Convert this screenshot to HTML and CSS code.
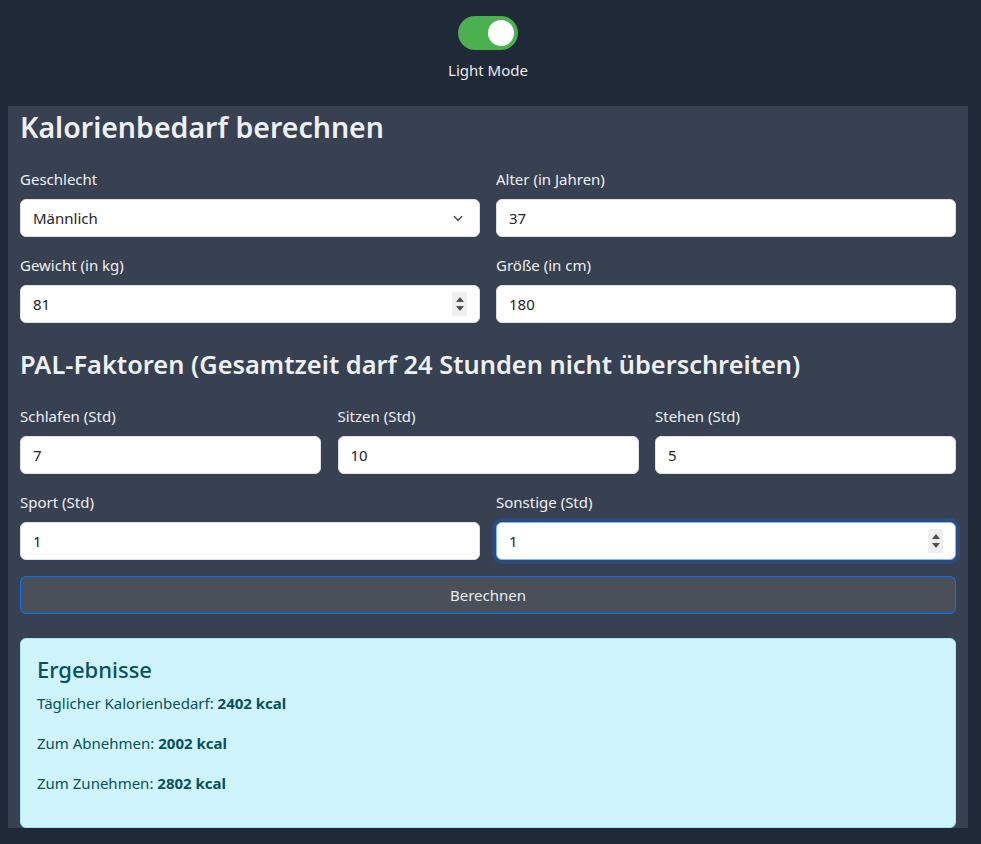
FILE: index.html
```html
<!DOCTYPE html>
<html lang="de">
<head>
<meta charset="utf-8">
<title>Kalorienbedarf berechnen</title>
<link rel="stylesheet" href="styles.css">
</head>
<body>
<div class="page">
  <header class="top">
    <label class="switch">
      <input type="checkbox" checked>
      <span class="slider"></span>
    </label>
    <div class="mode-label">Light Mode</div>
  </header>

  <main class="panel">
    <h2 class="title">Kalorienbedarf berechnen</h2>
    <form class="form">
      <div class="grid grid-2">
        <div class="field">
          <label class="label">Geschlecht</label>
          <select class="control select">
            <option>Männlich</option>
            <option>Weiblich</option>
          </select>
        </div>
        <div class="field">
          <label class="label">Alter (in Jahren)</label>
          <input class="control" type="text" value="37">
        </div>
        <div class="field">
          <label class="label">Gewicht (in kg)</label>
          <div class="spin-wrap">
            <input class="control" type="text" value="81">
            <span class="spinner"><span class="up"></span><span class="down"></span></span>
          </div>
        </div>
        <div class="field">
          <label class="label">Größe (in cm)</label>
          <input class="control" type="text" value="180">
        </div>
      </div>

      <h3 class="subtitle">PAL-Faktoren (Gesamtzeit darf 24 Stunden nicht überschreiten)</h3>

      <div class="grid grid-3">
        <div class="field">
          <label class="label">Schlafen (Std)</label>
          <input class="control" type="text" value="7">
        </div>
        <div class="field">
          <label class="label">Sitzen (Std)</label>
          <input class="control" type="text" value="10">
        </div>
        <div class="field">
          <label class="label">Stehen (Std)</label>
          <input class="control" type="text" value="5">
        </div>
      </div>
      <div class="grid grid-2">
        <div class="field">
          <label class="label">Sport (Std)</label>
          <input class="control" type="text" value="1">
        </div>
        <div class="field">
          <label class="label">Sonstige (Std)</label>
          <div class="spin-wrap">
            <input class="control focused" type="text" value="1">
            <span class="spinner"><span class="up"></span><span class="down"></span></span>
          </div>
        </div>
      </div>

      <button type="button" class="btn">Berechnen</button>
    </form>

    <div class="alert">
      <h4 class="alert-title">Ergebnisse</h4>
      <p>Täglicher Kalorienbedarf: <strong>2402 kcal</strong></p>
      <p>Zum Abnehmen: <strong>2002 kcal</strong></p>
      <p>Zum Zunehmen: <strong>2802 kcal</strong></p>
    </div>
  </main>
</div>
</body>
</html>
```

FILE: styles.css
```css
* { box-sizing: border-box; }

html, body {
  background: #202938;
}

body {
  margin: 8px;
  font-family: "Noto Sans", "Open Sans", sans-serif;
  font-size: 15px;
  line-height: 24px;
  color: #e9ecef;
}

.page {
  width: 960px;
}

.top {
  display: flex;
  flex-direction: column;
  align-items: center;
  padding-top: 8px;
  padding-bottom: 24px;
}

.switch {
  position: relative;
  display: block;
  width: 60px;
  height: 34px;
}

.switch input {
  opacity: 0;
  width: 0;
  height: 0;
  margin: 0;
}

.slider {
  position: absolute;
  inset: 0;
  background: #4caf50;
  border-radius: 17px;
}

.slider::before {
  content: "";
  position: absolute;
  left: 30px;
  top: 4px;
  width: 26px;
  height: 26px;
  border-radius: 50%;
  background: #ffffff;
}

.mode-label {
  margin-top: 8px;
  color: #e9ecef;
}

.panel {
  background: #384152;
  padding: 3px 12px 0;
}

.title {
  margin: 0 0 22px;
  font-size: 28.5px;
  line-height: 36px;
  font-weight: 600;
  color: #eef0f3;
}

.subtitle {
  margin: 9px 0 24px;
  font-size: 25.4px;
  line-height: 32px;
  font-weight: 600;
  color: #eef0f3;
}

.grid {
  display: grid;
  column-gap: 16px;
}

.grid-2 { grid-template-columns: 1fr 1fr; }
.grid-3 { grid-template-columns: 1fr 1fr 1fr; column-gap: 16.5px; }

.field {
  margin-bottom: 16px;
  display: flex;
  flex-direction: column;
}

.label {
  display: block;
  margin-bottom: 8px;
  color: #eef0f3;
}

.control {
  display: block;
  width: 100%;
  height: 38px;
  padding: 6px 12px;
  font-family: inherit;
  font-size: 15px;
  line-height: 24px;
  color: #212529;
  background: #ffffff;
  border: 1px solid #dee2e6;
  border-radius: 6px;
  outline: none;
}

.select {
  appearance: none;
  -webkit-appearance: none;
  padding-right: 36px;
  background-image: url("data:image/svg+xml,%3csvg xmlns='http://www.w3.org/2000/svg' viewBox='0 0 16 16'%3e%3cpath fill='none' stroke='%23343a40' stroke-linecap='round' stroke-linejoin='round' stroke-width='1.6' d='m3 6 5 5 5-5'/%3e%3c/svg%3e");
  background-repeat: no-repeat;
  background-position: right 13px center;
  background-size: 16px 12px;
}

.focused {
  border-color: #86b7fe;
  box-shadow: 0 0 0 4px rgba(13, 110, 253, 0.25);
}

.spin-wrap {
  position: relative;
}

.spinner {
  position: absolute;
  right: 13px;
  top: 7px;
  width: 15px;
  height: 24px;
  background: #efefef;
  display: flex;
  flex-direction: column;
  align-items: center;
  justify-content: center;
  gap: 4px;
}

.spinner .up {
  width: 0;
  height: 0;
  border-left: 4px solid transparent;
  border-right: 4px solid transparent;
  border-bottom: 5px solid #505050;
}

.spinner .down {
  width: 0;
  height: 0;
  border-left: 4px solid transparent;
  border-right: 4px solid transparent;
  border-top: 5px solid #505050;
}

.btn {
  display: block;
  width: 100%;
  height: 38px;
  margin: 0 0 24px;
  font-family: inherit;
  font-size: 15px;
  line-height: 24px;
  color: #e9ecef;
  background: #4a5059;
  border: 1px solid #0d6efd;
  border-radius: 6px;
}

.alert {
  background: #cff4fc;
  border: 1px solid #9eeaf9;
  border-radius: 6px;
  padding: 16px;
  color: #055160;
}

.alert-title {
  margin: 0 0 8px;
  font-size: 22px;
  line-height: 28px;
  font-weight: 500;
}

.alert p {
  margin: 0 0 16px;
}

.alert strong {
  font-weight: 700;
}
```
